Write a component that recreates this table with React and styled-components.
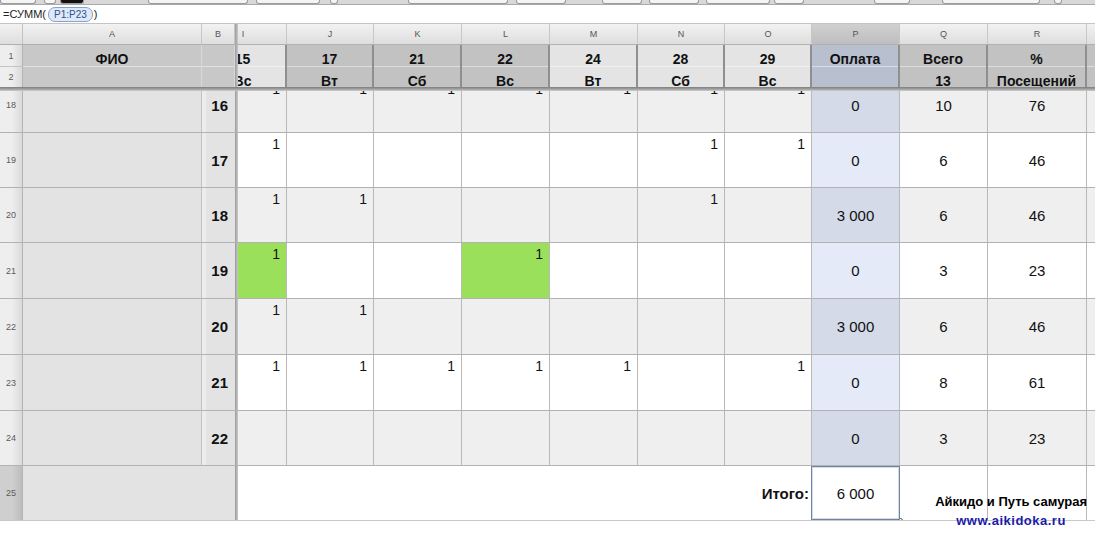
import React from "react";
import styled, { createGlobalStyle } from "styled-components";

const GlobalStyle = createGlobalStyle`
  html, body {
    margin: 0;
    padding: 0;
    background: #ffffff;
  }
  body {
    font-family: "Liberation Sans", Arial, sans-serif;
    overflow: hidden;
  }
`;

/* ---- data ---- */

const DAYS = [
  { id: "I", w: 87, top: "15", bottom: "Вс", tone: "light" },
  { id: "J", w: 87, top: "17", bottom: "Вт", tone: "dark" },
  { id: "K", w: 88, top: "21", bottom: "Сб", tone: "dark" },
  { id: "L", w: 88, top: "22", bottom: "Вс", tone: "dark" },
  { id: "M", w: 88, top: "24", bottom: "Вт", tone: "light" },
  { id: "N", w: 87, top: "28", bottom: "Сб", tone: "light" },
  { id: "O", w: 87, top: "29", bottom: "Вс", tone: "light" },
];

const SUMS = [
  { id: "P", w: 88, top: "Оплата", bottom: "", tone: "blue" },
  { id: "Q", w: 88, top: "Всего", bottom: "13", tone: "dark" },
  { id: "R", w: 99, top: "%", bottom: "Посещений", tone: "dark" },
  { id: "S", w: 80, top: "", bottom: "", tone: "dark" },
];

const ROWS = [
  { n: 18, num: 16, h: 55, odd: false, marks: "IJKLMNO", green: "", pay: "0", total: "10", pct: "76" },
  { n: 19, num: 17, h: 55, odd: true, marks: "INO", green: "", pay: "0", total: "6", pct: "46" },
  { n: 20, num: 18, h: 55, odd: false, marks: "IJN", green: "", pay: "3 000", total: "6", pct: "46" },
  { n: 21, num: 19, h: 56, odd: true, marks: "IL", green: "IL", pay: "0", total: "3", pct: "23" },
  { n: 22, num: 20, h: 56, odd: false, marks: "IJ", green: "", pay: "3 000", total: "6", pct: "46" },
  { n: 23, num: 21, h: 56, odd: true, marks: "IJKLMO", green: "", pay: "0", total: "8", pct: "61" },
  { n: 24, num: 22, h: 55, odd: false, marks: "", green: "", pay: "0", total: "3", pct: "23" },
];

const TOOLS = [
  [0, 34, false], [8, 10, false], [4, 22, true], [64, 98, false], [8, 62, false],
  [10, 6, false], [70, 98, false], [8, 48, false], [36, 38, false], [7, 48, false],
  [7, 62, false], [4, 28, false], [70, 34, false], [32, 96, false], [14, 6, false],
];

const FILL = {
  gray: "#efefef",
  white: "#ffffff",
  green: "#9be05b",
  payGray: "#d4dae8",
  payWhite: "#e4eaf8",
};

const HEAD_TONE = {
  light: "#e4e4e4",
  dark: "#c2c2c2",
  blue: "#b8bfcf",
  side: "#c8c8c8",
};

/* ---- layout ---- */

const Sheet = styled.div`
  position: relative;
  width: 1095px;
  height: 541px;
  overflow: hidden;
  background: #ffffff;
  display: flex;
  flex-direction: column;
`;

const Toolbar = styled.div`
  height: 5px;
  flex: none;
  display: flex;
  background: #d8d8d8;
  box-sizing: border-box;
  border-bottom: 1px solid #a9a9a9;
`;

const ToolButton = styled.span`
  width: ${(p) => p.$w}px;
  margin-left: ${(p) => p.$gap}px;
  height: 3px;
  flex: none;
  background: ${(p) => (p.$dark ? "#111111" : "#f4f4f4")};
  border: 1px solid #9b9b9b;
  border-top: none;
  border-radius: 0 0 3px 3px;
`;

const FormulaBar = styled.div`
  height: 19px;
  flex: none;
  box-sizing: border-box;
  display: flex;
  align-items: center;
  padding-left: 3px;
  font-size: 11px;
  color: #222222;
  background: #ffffff;
  border-bottom: 1px solid #c4c4c4;
`;

const RangePill = styled.span`
  display: inline-flex;
  align-items: center;
  height: 13px;
  padding: 0 5px;
  margin: 0 1px 0 2px;
  font-size: 10px;
  color: #2d5290;
  background: #dfe9f7;
  border: 1px solid #86a3cc;
  border-radius: 7px;
`;

const LetterRow = styled.div`
  height: 21px;
  flex: none;
  display: flex;
  box-sizing: border-box;
  background: linear-gradient(#f2f2f2, #dedede);
  border-bottom: 1px solid #b1b1b1;
`;

const Corner = styled.div`
  width: 23px;
  flex: none;
  box-sizing: border-box;
  border-right: 1px solid #c2c2c2;
`;

const LetterCell = styled.div`
  width: ${(p) => p.$w}px;
  flex: none;
  box-sizing: border-box;
  display: flex;
  align-items: center;
  justify-content: center;
  font-size: 9px;
  color: #555555;
  background: ${(p) => (p.$active ? "linear-gradient(#d0d0d0, #bebebe)" : "transparent")};
  border-right: 1px solid #c7c7c7;
`;

const FreezeV = styled.div`
  width: 3px;
  flex: none;
  background: linear-gradient(to right, #9a9a9a, #cacaca);
`;

const FreezeH = styled.div`
  height: 4px;
  flex: none;
  background: linear-gradient(#7e7e7e, #a6a6a6 60%, #d0d0d0);
`;

const Pane = styled.div`
  flex: 1;
  min-width: 0;
  overflow: hidden;
  display: flex;
`;

const Track = styled.div`
  display: flex;
  flex: none;
  margin-left: -38px;
`;

/* header rows 1-2 */

const HeadRows = styled.div`
  height: 42px;
  flex: none;
  display: flex;
`;

const RowNumStack = styled.div`
  width: 23px;
  flex: none;
  display: flex;
  flex-direction: column;
  box-sizing: border-box;
  border-right: 1px solid #b4b4b4;
`;

const HeadNum = styled.div`
  height: ${(p) => p.$h}px;
  box-sizing: border-box;
  display: flex;
  align-items: center;
  justify-content: center;
  font-size: 9px;
  color: #5a5a5a;
  background: linear-gradient(to right, #eeeeee 55%, #dadada);
  border-bottom: ${(p) => (p.$divide ? "1px solid #c4c4c4" : "none")};
`;

const HeadColumn = styled.div`
  width: ${(p) => p.$w}px;
  flex: none;
  box-sizing: border-box;
  display: flex;
  flex-direction: column;
  background: ${(p) => HEAD_TONE[p.$tone]};
  border-right: ${(p) => (p.$soft ? "1px solid #d8d8d8" : "2px solid #8f8f8f")};
  font-size: 14px;
  font-weight: bold;
  color: #111111;
  white-space: nowrap;
`;

const HeadTop = styled.div`
  height: 22px;
  box-sizing: border-box;
  padding-top: 6px;
  display: flex;
  align-items: center;
  justify-content: center;
  border-bottom: 1px solid rgba(255, 255, 255, 0.45);
`;

const HeadBottom = styled.div`
  flex: 1;
  box-sizing: border-box;
  padding-top: 6px;
  display: flex;
  align-items: center;
  justify-content: center;
`;

/* body */

const BodyViewport = styled.div`
  flex: 1;
  overflow: hidden;
`;

const BodyTrack = styled.div`
  display: flex;
  flex-direction: column;
  margin-top: -13px;
`;

const Row = styled.div`
  height: ${(p) => p.$h}px;
  flex: none;
  display: flex;
  box-sizing: border-box;
  border-bottom: 1px solid ${(p) => (p.$last ? "#c9c9c9" : "#b2b2b2")};
`;

const RowHead = styled.div`
  width: 23px;
  flex: none;
  box-sizing: border-box;
  display: flex;
  align-items: center;
  justify-content: center;
  font-size: 9px;
  color: #5a5a5a;
  background: ${(p) =>
    p.$selected
      ? "linear-gradient(to right, #cfcfcf 55%, #bcbcbc)"
      : "linear-gradient(to right, #eeeeee 55%, #dadada)"};
  border-right: 1px solid #b4b4b4;
`;

const NameCell = styled.div`
  width: ${(p) => p.$w}px;
  flex: none;
  box-sizing: border-box;
  background: #e3e3e3;
  border-right: ${(p) => (p.$merged ? "none" : "1px solid #c2c2c2")};
`;

const NumCell = styled.div`
  width: 33px;
  flex: none;
  box-sizing: border-box;
  display: flex;
  align-items: center;
  justify-content: flex-end;
  padding-right: 7px;
  background: #e3e3e3;
  box-shadow: inset 4px 0 0 #ececec;
  font-size: 15px;
  font-weight: bold;
  color: #111111;
`;

const DataCell = styled.div`
  width: ${(p) => p.$w}px;
  flex: none;
  box-sizing: border-box;
  display: flex;
  justify-content: ${(p) => (p.$center ? "center" : "flex-end")};
  align-items: ${(p) => (p.$center ? "center" : "flex-start")};
  padding: ${(p) => (p.$center ? "0" : "3px 6px 0 0")};
  font-size: ${(p) => (p.$center ? 15 : 14)}px;
  color: #111111;
  background: ${(p) => FILL[p.$fill]};
  border-right: ${(p) => (p.$bare ? "none" : "1px solid #b9b9b9")};
`;

const TotalLabel = styled.div`
  width: ${(p) => p.$w}px;
  flex: none;
  box-sizing: border-box;
  display: flex;
  align-items: center;
  justify-content: flex-end;
  padding-right: 3px;
  font-size: 15px;
  font-weight: bold;
  color: #111111;
  background: #ffffff;
`;

const SelectedCell = styled.div`
  position: relative;
  width: 89px;
  margin-left: -1px;
  flex: none;
  box-sizing: border-box;
  display: flex;
  align-items: center;
  justify-content: center;
  font-size: 15px;
  color: #111111;
  background: #ffffff;
  border: 1px solid #6f84a6;
  box-shadow: inset 0 0 0 1px #d3dbe8;
`;

const FillHandle = styled.span`
  position: absolute;
  right: -4px;
  bottom: -4px;
  width: 5px;
  height: 5px;
  box-sizing: border-box;
  background: #ffffff;
  border: 1px solid #555555;
  border-radius: 50%;
`;

const Watermark = styled.div`
  position: absolute;
  right: 8px;
  top: 492px;
  text-align: center;
  font-size: 13px;
  font-weight: bold;
  line-height: 19px;
  color: #000000;
`;

const SiteLink = styled.div`
  color: #1b1ba8;
  letter-spacing: 0.5px;
`;

function LeftHead() {
  return (
    <>
      <RowNumStack>
        <HeadNum $h={22} $divide>1</HeadNum>
        <HeadNum $h={20}>2</HeadNum>
      </RowNumStack>
      <HeadColumn $w={179} $tone="side" $soft>
        <HeadTop>ФИО</HeadTop>
        <HeadBottom />
      </HeadColumn>
      <HeadColumn $w={33} $tone="side" $soft>
        <HeadTop />
        <HeadBottom />
      </HeadColumn>
      <FreezeV />
    </>
  );
}

function BodyRow({ row }) {
  const base = row.odd ? "white" : "gray";
  return (
    <Row $h={row.h}>
      <RowHead>{row.n}</RowHead>
      <NameCell $w={179} />
      <NumCell>{row.num}</NumCell>
      <FreezeV />
      <Pane>
        <Track>
          {DAYS.map((d) => (
            <DataCell key={d.id} $w={d.w} $fill={row.green.includes(d.id) ? "green" : base}>
              {row.marks.includes(d.id) ? "1" : ""}
            </DataCell>
          ))}
          <DataCell $w={88} $center $fill={row.odd ? "payWhite" : "payGray"}>
            {row.pay}
          </DataCell>
          <DataCell $w={88} $center $fill={base}>
            {row.total}
          </DataCell>
          <DataCell $w={99} $center $fill={base}>
            {row.pct}
          </DataCell>
          <DataCell $w={80} $fill={base} />
        </Track>
      </Pane>
    </Row>
  );
}

export default function App() {
  const daysWidth = DAYS.reduce((s, d) => s + d.w, 0);
  return (
    <Sheet>
      <GlobalStyle />
      <Toolbar>
        {TOOLS.map(([gap, w, dark], i) => (
          <ToolButton key={i} $gap={gap} $w={w} $dark={dark} />
        ))}
      </Toolbar>

      <FormulaBar>
        =СУММ(<RangePill>P1:P23</RangePill>)
      </FormulaBar>

      <LetterRow>
        <Corner />
        <LetterCell $w={179}>A</LetterCell>
        <LetterCell $w={33}>B</LetterCell>
        <FreezeV />
        <Pane>
          <Track>
            {[...DAYS, ...SUMS].map((c) => (
              <LetterCell key={c.id} $w={c.w} $active={c.id === "P"}>
                {c.id}
              </LetterCell>
            ))}
          </Track>
        </Pane>
      </LetterRow>

      <HeadRows>
        <LeftHead />
        <Pane>
          <Track>
            {[...DAYS, ...SUMS].map((c) => (
              <HeadColumn key={c.id} $w={c.w} $tone={c.tone}>
                <HeadTop>{c.top}</HeadTop>
                <HeadBottom>{c.bottom}</HeadBottom>
              </HeadColumn>
            ))}
          </Track>
        </Pane>
      </HeadRows>

      <FreezeH />

      <BodyViewport>
        <BodyTrack>
          {ROWS.map((r) => (
            <BodyRow key={r.n} row={r} />
          ))}
          <Row $h={55} $last>
            <RowHead $selected>25</RowHead>
            <NameCell $w={212} $merged />
            <FreezeV />
            <Pane>
              <Track>
                <TotalLabel $w={daysWidth}>Итого:</TotalLabel>
                <SelectedCell>
                  6 000
                  <FillHandle />
                </SelectedCell>
                <DataCell $w={88} $fill="white" />
                <DataCell $w={99} $fill="white" />
                <DataCell $w={80} $fill="white" $bare />
              </Track>
            </Pane>
          </Row>
        </BodyTrack>
      </BodyViewport>

      <Watermark>
        Айкидо и Путь самурая
        <SiteLink>www.aikidoka.ru</SiteLink>
      </Watermark>
    </Sheet>
  );
}
